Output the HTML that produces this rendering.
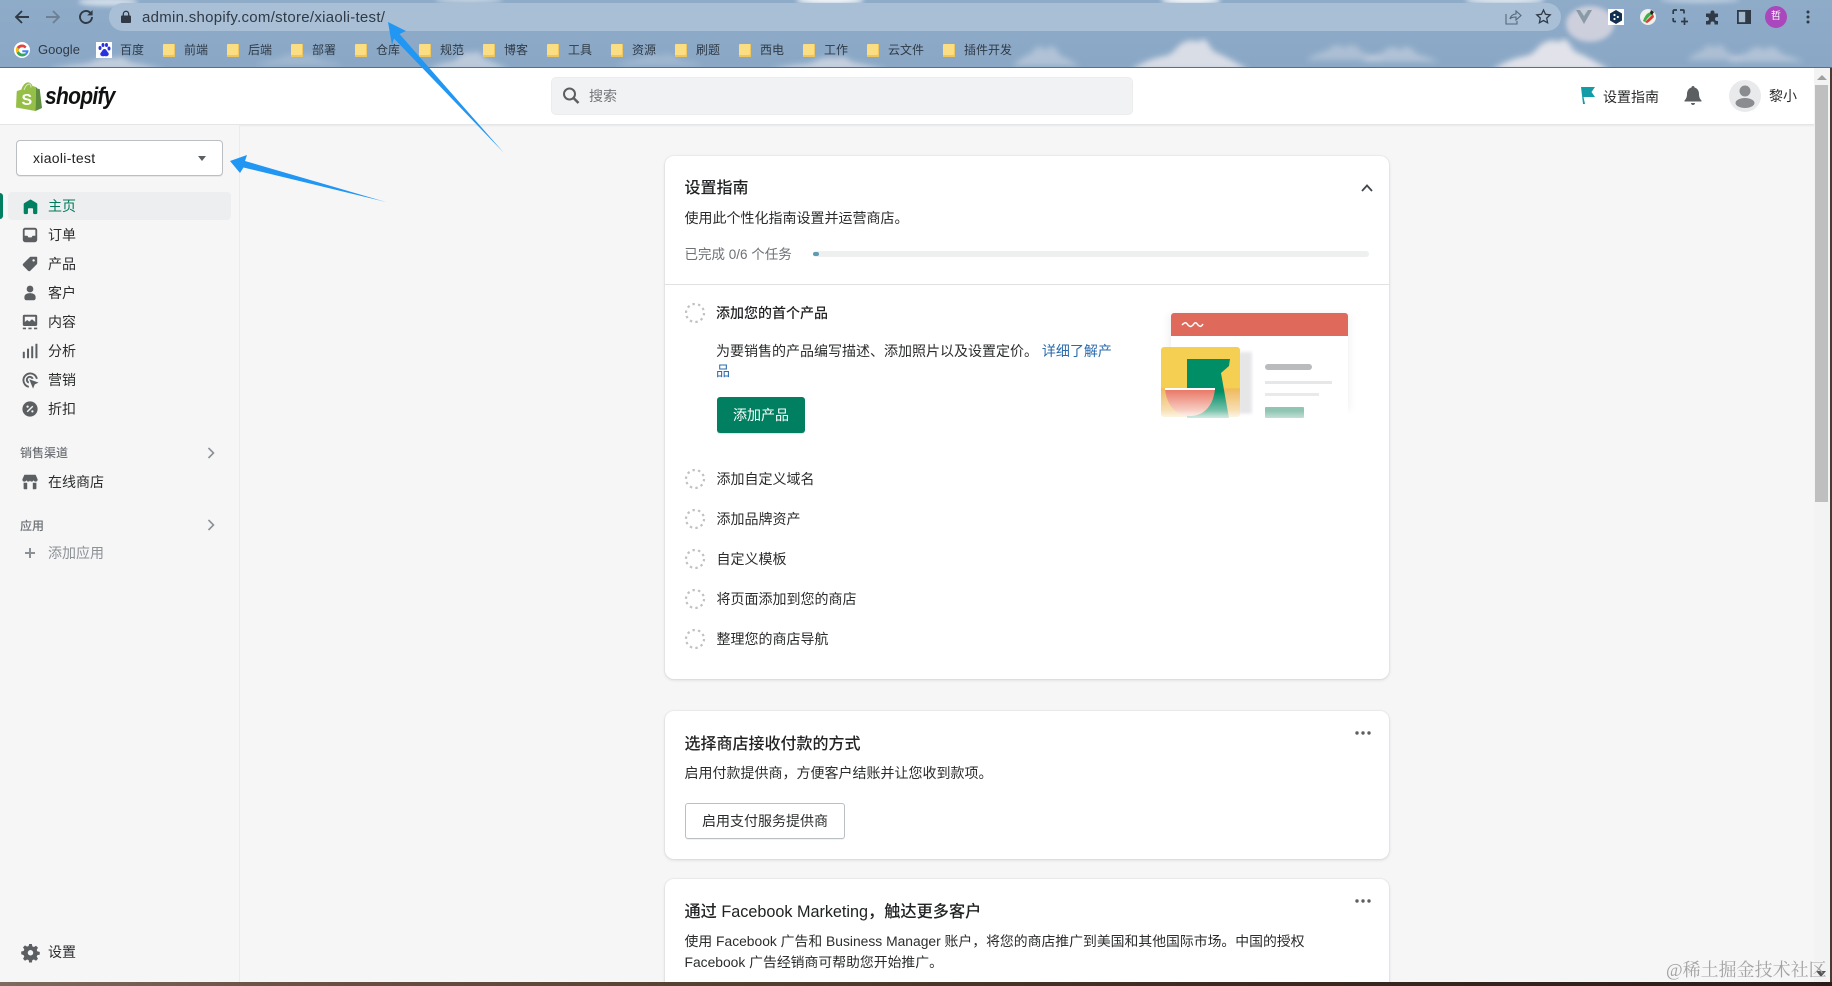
<!DOCTYPE html>
<html lang="zh"><head><meta charset="utf-8"><title>Shopify</title>
<style>
*{box-sizing:border-box}
html,body{margin:0;padding:0;width:1832px;height:986px;overflow:hidden;background:#f6f6f7}
body{position:relative;font-family:"Liberation Sans","Noto Sans CJK SC",sans-serif;font-size:14px;color:#2b2c2d}
.a,.t{position:absolute}
.t{line-height:20px;height:20px;white-space:nowrap}
svg{position:absolute;overflow:visible}
.card{position:absolute;left:665px;width:724px;background:#fff;border-radius:9px;box-shadow:0 0 0 1px rgba(63,63,68,.03),0 1px 3px rgba(63,63,68,.16)}
.nav{left:48px}
.ic{fill:#5c5f62}
.bm{font-size:13px;color:#2f3a46}
.f{position:absolute;top:44px;width:12px;height:13px;margin-left:1px;background:#fbdd83;border-radius:1px;box-shadow:inset -1px -2px 0 #eec65c}
</style></head><body>

<!-- wallpaper / browser chrome -->
<div class="a" style="left:0;top:0;width:1832px;height:68px;background:linear-gradient(180deg,#8eabc8,#8aa8c6);overflow:hidden;border-bottom:1px solid #5f6e7e">
<svg width="1832" height="68" style="left:0;top:0">
<defs><filter id="b"><feGaussianBlur stdDeviation="3"/></filter><filter id="c"><feGaussianBlur stdDeviation="2.500"/></filter>
<path id="cl" d="M-60 0C-48-8-38-12-26-14-16-16-14-26-6-28 2-32 6-26 10-30 16-34 18-22 24-18 34-14 44-8 58 0z"/>
<path id="cs" d="M-55 0C-46-5-34-8-24-10-16-16-8-16 0-12 8-18 18-14 24-8 36-6 46-3 55 0z"/>
</defs>
<g filter="url(#b)" fill="#f7f1f3">
<use href="#cl" transform="translate(1191 70)" opacity=".72"/>
<use href="#cl" transform="translate(1552 70)" opacity=".8"/>
<use href="#cl" transform="translate(830 70) scale(1 .42)" opacity=".55"/>
<use href="#cl" transform="translate(469 70) scale(.7 .6)" opacity=".45"/>
<use href="#cl" transform="translate(108 70) scale(1 .42)" opacity=".5"/>
<use href="#cs" transform="translate(1046 66) scale(.6 1.300)" opacity=".35"/>
<use href="#cs" transform="translate(1345 60) scale(.7 1)" opacity=".3"/>
<use href="#cs" transform="translate(1400 62) scale(.7 1)" opacity=".35"/>
<use href="#cs" transform="translate(1715 60) scale(.5 1)" opacity=".3"/>
<use href="#cs" transform="translate(1765 62) scale(.7 1)" opacity=".35"/>
<use href="#cs" transform="translate(300 66) scale(.8 .8)" opacity=".2"/>
<use href="#cs" transform="translate(660 66) scale(.8 .8)" opacity=".2"/>
</g>
<g filter="url(#c)" fill="#fff">
<ellipse cx="830" cy="0" rx="34" ry="4" opacity=".9"/>
<ellipse cx="1191" cy="0" rx="30" ry="4" opacity=".9"/>
<ellipse cx="469" cy="0" rx="34" ry="3" opacity=".5"/>
<ellipse cx="108" cy="2" rx="30" ry="4" opacity=".6"/>
<ellipse cx="1505" cy="0" rx="40" ry="4" opacity=".7"/>
<ellipse cx="1590" cy="24" rx="24" ry="18" fill="#f0e3e8" opacity=".65"/>
<ellipse cx="1700" cy="0" rx="40" ry="3" opacity=".4"/>
</g>
</svg>
<div class="a" style="left:109px;top:3px;width:1452px;height:28px;border-radius:14px;background:#a9bfd6"></div>
</div>

<!-- toolbar icons -->
<svg width="16" height="16" style="left:14px;top:9px" fill="none" stroke="#2f3a46" stroke-width="1.900"><path d="M15 8H2M8 2 2 8l6 6"/></svg>
<svg width="16" height="16" style="left:45px;top:9px" fill="none" stroke="#6f8094" stroke-width="1.900"><path d="M1 8h13M8 2l6 6-6 6"/></svg>
<svg width="16" height="16" style="left:78px;top:9px" fill="none" stroke="#2f3a46" stroke-width="1.900"><path d="M14 8a6 6 0 1 1-1.800-4.300L14 5.500"/><path d="M14.600 1v5.400H9.200" fill="#2f3a46" stroke="none"/></svg>
<svg width="10" height="12" style="left:121px;top:11px" fill="#2f3a46"><rect y="4.500" width="10" height="7.500" rx="1"/><path d="M2.300 5V3a2.700 2.700 0 0 1 5.400 0v2" fill="none" stroke="#2f3a46" stroke-width="1.300"/></svg>
<div class="t" style="left:142px;top:8px;font-size:15px;color:#2f3a46;letter-spacing:.28px">admin.shopify.com/store/xiaoli-test/</div>
<svg width="16" height="16" style="left:1505px;top:9px" fill="none" stroke="#55677a" stroke-width="1.100"><path d="M1 5v10h11v-3M5 10c.5-3 3-5 6-5V2l5 4.500-5 4.500V8c-3 0-5 .5-6 2z"/></svg>
<svg width="15" height="15" style="left:1536px;top:9px" fill="none" stroke="#2f3a46" stroke-width="1.300"><path d="M7.500 1l2 4.300 4.700.6-3.500 3.200.9 4.700-4.100-2.300-4.100 2.300.9-4.700L.8 5.900l4.700-.6z"/></svg>
<svg width="16" height="14" style="left:1576px;top:10px"><path d="M0 0h16L8 14z" fill="#8a9aa6"/><path d="M4 0h8L8 6z" fill="#c2ccd6"/></svg>
<svg width="16" height="16" style="left:1608px;top:9px"><rect width="16" height="16" fill="#fff"/><path d="M8 1l6 3.500v7L8 15 2 11.500v-7z" fill="#12304f"/><circle cx="6.500" cy="6" r="1.100" fill="#fff"/><circle cx="9.800" cy="8" r="1.100" fill="#fff"/><circle cx="6.500" cy="10" r="1.100" fill="#fff"/></svg>
<svg width="16" height="16" style="left:1640px;top:9px"><circle cx="8" cy="8" r="8" fill="#eef0ee"/><path d="M3 12C5 6 8 3 12 3L13 5C9 7 7 10 5 13z" fill="#3fae4c"/><path d="M5 13 13 5l1 3c-3 3-5 5-7 6z" fill="#d8402e"/><path d="M11 1l3 2-2 3-2-2z" fill="#222"/></svg>
<svg width="16" height="16" style="left:1672px;top:9px" fill="none" stroke="#2f3a46" stroke-width="1.700"><path d="M5 1H2.200a1 1 0 0 0-1 1v3M1.200 9v2.500a1 1 0 0 0 1 1H4M8 1h3a1 1 0 0 1 1 1v2.500M12.500 8.500V16M9 12.500h7"/></svg>
<svg width="15" height="15" style="left:1705px;top:10px" fill="#2f3a46"><path d="M5.500 2.500a2 2 0 0 1 4 0V3.500H13v3.500h-1a2 2 0 0 0 0 4h1V14.500H9.500v-1a2 2 0 0 0-4 0v1H1V11h1a2 2 0 0 0 0-4H1V3.500h4.500z"/></svg>
<svg width="14" height="14" style="left:1737px;top:10px"><rect width="14" height="14" fill="#2f3a46"/><rect x="1.800" y="1.800" width="6.400" height="10.400" fill="#a3b9cf"/></svg>
<div class="a" style="left:1765px;top:6px;width:22px;height:22px;border-radius:50%;background:#ab47bc;color:#fff;font-size:10px;line-height:22px;text-align:center">哲</div>
<svg width="4" height="14" style="left:1806px;top:10px" fill="#2f3a46"><circle cx="2" cy="2" r="1.500"/><circle cx="2" cy="7" r="1.500"/><circle cx="2" cy="12" r="1.500"/></svg>

<!-- bookmarks -->
<svg width="16" height="16" style="left:14px;top:42px" viewBox="0 0 16 16"><circle cx="8" cy="8" r="8" fill="#fff"/><path d="M14.500 8.200H8.300v2.100h3.600a3.800 3.800 0 1 1-1-4.100l1.600-1.500A6 6 0 0 0 2 8a6 6 0 0 0 12.600.2z" fill="#4285f4"/><path d="M3 5a6 6 0 0 1 9.500-.3l-1.600 1.500A3.800 3.800 0 0 0 5 6.500z" fill="#ea4335"/><path d="M2.600 5l2.300 1.800a3.700 3.700 0 0 0 0 2.400L2.700 11a6 6 0 0 1-.1-6z" fill="#fbbc05"/><path d="M2.700 11l2.300-1.800a3.800 3.800 0 0 0 5.300 2l1.900 1.600A6 6 0 0 1 2.700 11z" fill="#34a853"/></svg>
<div class="t bm" style="left:38px;top:40px">Google</div>
<svg width="16" height="16" style="left:96px;top:42px"><rect width="16" height="16" fill="#fff"/><g fill="#2932e1"><ellipse cx="4" cy="6" rx="1.500" ry="2"/><ellipse cx="7" cy="3" rx="1.500" ry="2"/><ellipse cx="10.500" cy="3" rx="1.500" ry="2"/><ellipse cx="13" cy="6.500" rx="1.500" ry="2"/><path d="M8.500 7c2 0 2 2 4 4 1 2-1 4-4 3-3 1-5-1-4-3 2-2 2-4 4-4z"/></g></svg>
<div class="t bm" style="left:120px;top:40px;font-size:12px">百度</div>
<div class="f" style="left:162px"></div><div class="t bm" style="left:184px;top:40px;font-size:12px">前端</div>
<div class="f" style="left:226px"></div><div class="t bm" style="left:248px;top:40px;font-size:12px">后端</div>
<div class="f" style="left:290px"></div><div class="t bm" style="left:312px;top:40px;font-size:12px">部署</div>
<div class="f" style="left:354px"></div><div class="t bm" style="left:376px;top:40px;font-size:12px">仓库</div>
<div class="f" style="left:418px"></div><div class="t bm" style="left:440px;top:40px;font-size:12px">规范</div>
<div class="f" style="left:482px"></div><div class="t bm" style="left:504px;top:40px;font-size:12px">博客</div>
<div class="f" style="left:546px"></div><div class="t bm" style="left:568px;top:40px;font-size:12px">工具</div>
<div class="f" style="left:610px"></div><div class="t bm" style="left:632px;top:40px;font-size:12px">资源</div>
<div class="f" style="left:674px"></div><div class="t bm" style="left:696px;top:40px;font-size:12px">刷题</div>
<div class="f" style="left:738px"></div><div class="t bm" style="left:760px;top:40px;font-size:12px">西电</div>
<div class="f" style="left:802px"></div><div class="t bm" style="left:824px;top:40px;font-size:12px">工作</div>
<div class="f" style="left:866px"></div><div class="t bm" style="left:888px;top:40px;font-size:12px">云文件</div>
<div class="f" style="left:942px"></div><div class="t bm" style="left:964px;top:40px;font-size:12px">插件开发</div>

<!-- app header -->
<div class="a" style="left:0;top:68px;width:1832px;height:57px;background:#fff;border-bottom:1px solid #e4e5e7;box-shadow:0 1px 2px rgba(0,0,0,.06)"></div>
<svg width="26" height="29" style="left:16px;top:82px" viewBox="0 0 26 29"><path d="M20 5 16.500 4C15.500 1 13 0 11 .5 8 1.500 6 5 5.500 7.500L1.800 8.700C.8 9 .8 9 .7 10L0 25.500 19.500 29z" fill="#95bf47"/><path d="M20 5l1.700 1.700 2 .3L26 26l-6.500 3z" fill="#5e8e3e"/><path d="M8 8c1-3 3-6 5.500-6 1 0 1.500 2 1.500 3.500" fill="none" stroke="#dfe9c8" stroke-width=".9"/><text x="5.500" y="23" font-family="Liberation Sans" font-weight="700" font-size="16" fill="#fff">S</text></svg>
<div class="t" style="left:45px;top:83px;height:28px;line-height:28px;font-size:24px;font-weight:700;font-style:italic;color:#101112;letter-spacing:-.8px;transform:scaleX(.875);transform-origin:0 50%">shopify</div>

<div class="a" style="left:552px;top:78px;width:580px;height:36px;background:#f1f2f3;border-radius:4px;box-shadow:0 0 0 1px #ebeced"></div>
<svg width="20" height="20" style="left:561px;top:86px" fill="none" stroke="#5c5f62" stroke-width="2"><circle cx="8.500" cy="8" r="5.500"/><path d="M12.500 12l5 5" stroke-width="2.500"/></svg>
<div class="t" style="left:589px;top:86px;color:#72767a">搜索</div>

<svg width="16" height="19" style="left:1580px;top:86px"><path d="M1 1h14l-3.500 5L15 11H3.500L5 18H3z" fill="#129ca8"/></svg>
<div class="t" style="left:1603px;top:87px">设置指南</div>
<svg width="18" height="22" style="left:1684px;top:85px" fill="#5c5f62"><path d="M9 1c1 0 1.500.6 1.500 1.500C13.500 3.300 15 6 15 9c0 3 1 5 2.500 6.500v1h-17v-1C2 14 3 12 3 9c0-3 1.500-5.700 4.500-6.500C7.500 1.600 8 1 9 1z"/><path d="M7 18h4c0 1.200-1 2-2 2s-2-.8-2-2z"/></svg>
<div class="a" style="left:1729px;top:80px;width:32px;height:32px;border-radius:50%;background:#e9eaeb;overflow:hidden"><svg width="32" height="32" fill="#8a8c8f"><circle cx="16" cy="11" r="5.500"/><ellipse cx="16" cy="23" rx="9.500" ry="5"/></svg></div>
<div class="t" style="left:1769px;top:86px">黎小</div>

<!-- scrollbar -->
<div class="a" style="left:1814px;top:68px;width:16px;height:914px;background:#f3f3f3"></div>
<div class="a" style="left:1815px;top:85px;width:13px;height:417px;background:#bfbfbf"></div>
<svg width="10" height="6" style="left:1817px;top:75px"><path d="M0 5h10L5 0z" fill="#a0a0a0"/></svg>

<!-- sidebar -->
<div class="a" style="left:0;top:125px;width:240px;height:857px;background:#f6f6f7;border-right:1px solid #ebebec"></div>
<div class="a" style="left:16px;top:140px;width:207px;height:36px;background:#fff;border:1px solid #babfc3;border-radius:4px;box-shadow:0 1px 0 rgba(0,0,0,.06)"></div>
<div class="t" style="left:33px;top:148px;color:#202223;letter-spacing:.3px">xiaoli-test</div>
<svg width="8" height="5" style="left:198px;top:156px"><path d="M0 0h8L4 5z" fill="#5c5f62"/></svg>

<div class="a" style="left:8px;top:192px;width:223px;height:28px;background:#edeeef;border-radius:4px"></div>
<div class="a" style="left:0;top:193px;width:3px;height:26px;background:#008060;border-radius:0 3px 3px 0"></div>

<svg width="17" height="17" viewBox="0 0 20 20" style="left:21.500px;top:197.500px" fill="#008060"><path d="M18 7.300V17.500c0 .8-.7 1.500-1.500 1.500h-2c-.8 0-1.500-.7-1.500-1.500V13c0-.6-.4-1-1-1H8c-.6 0-1 .4-1 1v4.500c0 .8-.7 1.500-1.500 1.500h-2C2.700 19 2 18.300 2 17.500V7.300c0-.5.300-1 .7-1.300l6.500-4a1.500 1.500 0 0 1 1.600 0l6.500 4c.4.300.7.800.7 1.300z"/></svg>
<div class="t nav" style="top:196px;color:#007a5a">主页</div>

<svg width="16" height="16" viewBox="0 0 20 20" style="left:22px;top:227px" class="ic"><path fill-rule="evenodd" d="M4 1h12a3 3 0 0 1 3 3v12a3 3 0 0 1-3 3H4a3 3 0 0 1-3-3V4a3 3 0 0 1 3-3zm0 2.500c-.4 0-.7.300-.7.700V11H6c.8 0 1.200.4 1.500 1l.5 1h4l.5-1c.3-.6.700-1 1.500-1h2.700V4.200c0-.4-.3-.7-.7-.7z"/></svg>
<div class="t nav" style="top:225px">订单</div>

<svg width="16" height="16" viewBox="0 0 20 20" style="left:22px;top:256px" class="ic"><path fill-rule="evenodd" d="M18.500 1H11a2 2 0 0 0-1.400.6L1.600 9.600a2 2 0 0 0 0 2.800l6 6a2 2 0 0 0 2.800 0l8-8A2 2 0 0 0 19 9V1.500zM14.500 7a1.500 1.500 0 1 1 0-3 1.500 1.500 0 0 1 0 3z"/></svg>
<div class="t nav" style="top:254px">产品</div>

<svg width="16" height="16" viewBox="0 0 20 20" style="left:22px;top:285px" class="ic"><circle cx="10" cy="5" r="4.200"/><path d="M3 15c0-3 3-4.800 7-4.800s7 1.800 7 4.800v1.500c0 1.300-1 2.500-2.500 2.500h-9C4 19 3 17.800 3 16.500z"/></svg>
<div class="t nav" style="top:283px">客户</div>

<svg width="16" height="16" viewBox="0 0 20 20" style="left:22px;top:314px" class="ic"><path fill-rule="evenodd" d="M3 1h14a2 2 0 0 1 2 2v10a2 2 0 0 1-2 2H3a2 2 0 0 1-2-2V3a2 2 0 0 1 2-2zm.5 2.500V10l3-2.500 2.500 2 3.500-3 4 3.500V3.500zM1 17h4v2H1zm7 0h4v2H8zm7 0h4v2h-4z"/></svg>
<div class="t nav" style="top:312px">内容</div>

<svg width="16" height="16" viewBox="0 0 20 20" style="left:22px;top:343px" class="ic"><rect x="1" y="11" width="2.500" height="8" rx=".5"/><rect x="6.300" y="7" width="2.500" height="12" rx=".5"/><rect x="11.500" y="4" width="2.500" height="15" rx=".5"/><rect x="16.800" y="1" width="2.500" height="18" rx=".5"/></svg>
<div class="t nav" style="top:341px">分析</div>

<svg width="17" height="17" viewBox="0 0 20 20" style="left:21.500px;top:371.500px"><g fill="none" stroke="#5c5f62" stroke-width="2.200"><path d="M8 17.500A8 8 0 1 1 17.500 8"/><path d="M8 12.500a3.500 3.500 0 1 1 4.500-4.500"/></g><path class="ic" d="M8.500 8.500l11 4-4.500 2-2 5z"/></svg>
<div class="t nav" style="top:370px">营销</div>

<svg width="16" height="16" viewBox="0 0 20 20" style="left:22px;top:401px"><circle cx="10" cy="10" r="9.500" class="ic"/><path d="M6.500 13.500l7-7" stroke="#f6f6f7" stroke-width="1.800"/><circle cx="7" cy="7" r="1.400" fill="#f6f6f7"/><circle cx="13" cy="13" r="1.400" fill="#f6f6f7"/></svg>
<div class="t nav" style="top:399px">折扣</div>

<div class="t" style="left:20px;top:443px;font-size:12px;color:#6d7175;font-weight:500">销售渠道</div>
<svg width="8" height="12" style="left:207px;top:447px" fill="none" stroke="#8c9196" stroke-width="1.600"><path d="M1.500 1l5 5-5 5"/></svg>
<svg width="16" height="16" viewBox="0 0 20 20" style="left:22px;top:474px" class="ic"><path d="M3 1h14l2.500 5.500c.3 1.800-.9 3-2.500 3-1.200 0-2.200-.7-2.500-1.700-.4 1-1.300 1.700-2.500 1.700s-2-.7-2-1.700c0 1-.8 1.700-2 1.700S5.900 8.800 5.500 7.800C5.200 8.800 4.200 9.500 3 9.500 1.400 9.500.2 8.300.5 6.500z"/><path d="M2 11h4.500v8H3a1 1 0 0 1-1-1zM13.500 11H18v7a1 1 0 0 1-1 1h-3.500z"/></svg>
<div class="t nav" style="top:472px">在线商店</div>

<div class="t" style="left:20px;top:516px;font-size:12px;color:#6d7175;font-weight:500">应用</div>
<svg width="8" height="12" style="left:207px;top:519px" fill="none" stroke="#8c9196" stroke-width="1.600"><path d="M1.500 1l5 5-5 5"/></svg>
<svg width="12" height="12" style="left:24px;top:547px" fill="#8c9196"><rect x="5" y="1" width="2" height="10"/><rect x="1" y="5" width="10" height="2"/></svg>
<div class="t nav" style="top:543px;color:#8c9196">添加应用</div>

<svg width="17" height="17" viewBox="0 0 20 20" style="left:21.500px;top:943.500px"><path class="ic" d="M8.400 0h3.200l.6 2.800 1.800.8 2.500-1.500 2.300 2.300-1.500 2.500.8 1.800 2.800.6v3.200l-2.800.6-.8 1.800 1.500 2.500-2.300 2.300-2.500-1.500-1.800.8-.6 2.800H8.400l-.6-2.800-1.800-.8-2.500 1.500-2.300-2.300 1.500-2.500-.8-1.800L-.9 12V8.800l2.800-.6.800-1.800L1.200 3.900l2.300-2.300L6 3.100l1.800-.8z"/><circle cx="10" cy="10.300" r="3.200" fill="#f6f6f7"/></svg>
<div class="t nav" style="top:942px">设置</div>

<!-- card 1 -->
<div class="card" style="top:156px;height:523px"></div>
<div class="t" style="left:684.500px;top:179px;font-size:16px;font-weight:500;color:#202223">设置指南</div>
<svg width="12" height="8" style="left:1361px;top:184px" fill="none" stroke="#44474a" stroke-width="1.800"><path d="M1 7l5-5.500L11 7"/></svg>
<div class="t" style="left:684.500px;top:208px;font-size:14px">使用此个性化指南设置并运营商店。</div>
<div class="t" style="left:684.500px;top:245px;font-size:13.500px;color:#6d7175">已完成 0/6 个任务</div>
<div class="a" style="left:813px;top:251px;width:556px;height:6px;background:#eeefef;border-radius:3px"></div>
<div class="a" style="left:813px;top:252px;width:6px;height:4px;background:#5f9cb4;border-radius:2px"></div>
<div class="a" style="left:665px;top:284px;width:724px;height:1px;background:#dfe1e3"></div>

<svg width="20" height="20" style="left:685px;top:303px"><circle cx="10" cy="10" r="9" fill="none" stroke="#bfc1c4" stroke-width="2.200" stroke-dasharray="2.400 3.250"/></svg>
<div class="t" style="left:716px;top:303px;font-weight:500;color:#202223">添加您的首个产品</div>
<div class="a" style="left:716px;top:341px;width:400px;line-height:20px;font-size:14px;color:#2b2c2d">为要销售的产品编写描述、添加照片以及设置定价。 <span style="color:#2a6bad">详细了解产品</span></div>
<div class="a" style="left:717px;top:397px;width:88px;height:36px;background:#008060;border-radius:3px;color:#fff;text-align:center;line-height:36px;box-shadow:0 1px 0 rgba(0,0,0,.1)">添加产品</div>

<!-- illustration -->
<svg width="240" height="130" style="left:1140px;top:300px">
<defs>
<linearGradient id="fade" x1="0" y1="0" x2="0" y2="1"><stop offset=".45" stop-color="#fff" stop-opacity="0"/><stop offset="1" stop-color="#fff" stop-opacity=".85"/></linearGradient>
<linearGradient id="teal" x1="0" y1="0" x2="0" y2="1"><stop offset="0" stop-color="#008e67"/><stop offset=".55" stop-color="#008e67"/><stop offset="1" stop-color="#a9d6c6"/></linearGradient>
<linearGradient id="bowl" x1="0" y1="0" x2="0" y2="1"><stop offset="0" stop-color="#e8705f"/><stop offset="1" stop-color="#fbe6dd"/></linearGradient>
<linearGradient id="yel" x1="0" y1="0" x2="0" y2="1"><stop offset="0" stop-color="#f4cf52"/><stop offset=".58" stop-color="#f4cf52"/><stop offset=".6" stop-color="#efb95e"/><stop offset="1" stop-color="#faecd0"/></linearGradient>
<filter id="soft"><feGaussianBlur stdDeviation="4"/></filter>
<filter id="s2"><feGaussianBlur stdDeviation="1.500"/></filter>
</defs>
<rect x="28" y="14" width="182" height="96" fill="#000" opacity=".05" filter="url(#soft)"/>
<rect x="31" y="13" width="177" height="107" rx="3" fill="#fff"/>
<path d="M31 36V16a3 3 0 0 1 3-3h171a3 3 0 0 1 3 3v20z" fill="#df6a5b"/>
<path d="M42 25c3-3 4-3 6 0 2 2 3 2 5 0 2-3 3-3 5 0 2 2 3 2 5-1" fill="none" stroke="#fff" stroke-width="1.500"/>
<rect x="98" y="52" width="14" height="62" fill="#e6e6e7" filter="url(#s2)"/>
<rect x="21" y="47" width="79" height="70" rx="3" fill="url(#yel)"/>
<path d="M47 59h43l-1 7-8 7 8 45H47z" fill="url(#teal)"/>
<path d="M25 88h50c-1 16-10 28-25 28s-24-12-25-28z" fill="url(#bowl)"/>
<rect x="25" y="88" width="50" height="2" fill="#fff"/>
<rect x="125" y="64" width="47" height="6" rx="3" fill="#b9bbbd"/>
<rect x="125" y="81" width="67" height="3" fill="#e6e7e8"/>
<rect x="125" y="93" width="54" height="3" fill="#e9eaea"/>
<rect x="125" y="107" width="39" height="11" rx="1" fill="#8fc5b2"/>
<rect x="15" y="100" width="200" height="24" fill="url(#fade)"/>
</svg>

<svg width="20" height="20" style="left:685px;top:469px"><circle cx="10" cy="10" r="9" fill="none" stroke="#bfc1c4" stroke-width="2.200" stroke-dasharray="2.400 3.250"/></svg>
<div class="t" style="left:716.500px;top:469px">添加自定义域名</div>
<svg width="20" height="20" style="left:685px;top:509px"><circle cx="10" cy="10" r="9" fill="none" stroke="#bfc1c4" stroke-width="2.200" stroke-dasharray="2.400 3.250"/></svg>
<div class="t" style="left:716.500px;top:509px">添加品牌资产</div>
<svg width="20" height="20" style="left:685px;top:549px"><circle cx="10" cy="10" r="9" fill="none" stroke="#bfc1c4" stroke-width="2.200" stroke-dasharray="2.400 3.250"/></svg>
<div class="t" style="left:716.500px;top:549px">自定义模板</div>
<svg width="20" height="20" style="left:685px;top:589px"><circle cx="10" cy="10" r="9" fill="none" stroke="#bfc1c4" stroke-width="2.200" stroke-dasharray="2.400 3.250"/></svg>
<div class="t" style="left:716.500px;top:589px">将页面添加到您的商店</div>
<svg width="20" height="20" style="left:685px;top:629px"><circle cx="10" cy="10" r="9" fill="none" stroke="#bfc1c4" stroke-width="2.200" stroke-dasharray="2.400 3.250"/></svg>
<div class="t" style="left:716.500px;top:629px">整理您的商店导航</div>

<!-- card 2 -->
<div class="card" style="top:711px;height:148px"></div>
<div class="t" style="left:684.500px;top:735px;font-size:16px;font-weight:500;color:#202223">选择商店接收付款的方式</div>
<div class="t" style="left:684.500px;top:763px;font-size:14px">启用付款提供商，方便客户结账并让您收到款项。</div>
<div class="a" style="left:685px;top:803px;width:160px;height:36px;background:#fff;border:1px solid #babfc3;border-radius:3px;text-align:center;line-height:34px;box-shadow:0 1px 0 rgba(0,0,0,.05);font-size:14px">启用支付服务提供商</div>
<svg width="16" height="4" style="left:1355px;top:731px" fill="#5c5f62"><circle cx="2" cy="2" r="1.700"/><circle cx="8" cy="2" r="1.700"/><circle cx="14" cy="2" r="1.700"/></svg>

<!-- card 3 -->
<div class="card" style="top:879px;height:140px"></div>
<div class="t" style="left:684.500px;top:902px;font-size:16.200px;font-weight:500;color:#202223">通过 Facebook Marketing，触达更多客户</div>
<div class="t" style="left:684.500px;top:931px;font-size:13.850px">使用 Facebook 广告和 Business Manager 账户，将您的商店推广到美国和其他国际市场。中国的授权</div>
<div class="t" style="left:684.500px;top:951.500px;font-size:13.850px">Facebook 广告经销商可帮助您开始推广。</div>
<svg width="16" height="4" style="left:1355px;top:899px" fill="#5c5f62"><circle cx="2" cy="2" r="1.700"/><circle cx="8" cy="2" r="1.700"/><circle cx="14" cy="2" r="1.700"/></svg>

<!-- desktop edges -->
<div class="a" style="left:1830px;top:68px;width:2px;height:918px;background:#4a3a36"></div>
<div class="a" style="left:0;top:982px;width:1832px;height:4px;background:linear-gradient(90deg,#7f6a60 0,#6a5246 15%,#54402f 40%,#3d2a22 65%,#2b1c1a 100%)"></div>
<svg width="10" height="6" style="left:1816px;top:971px"><path d="M0 0h10L5 6z" fill="#555"/></svg>

<!-- annotation arrows -->
<svg width="1832" height="986" style="left:0;top:0;pointer-events:none" fill="#2196f3">
<path d="M388 22 406 31 399.500 34 504 153 394 38.500 392 45z"/>
<path d="M230 161 247 155 245 161 386 202 243.500 167.500 240 173z"/>
</svg>

<div class="t" style="left:1666px;top:958px;height:24px;line-height:24px;font-size:18px;font-family:'Liberation Serif','Noto Serif CJK SC',serif;color:#a3a3a3">@稀土掘金技术社区</div>
</body></html>
